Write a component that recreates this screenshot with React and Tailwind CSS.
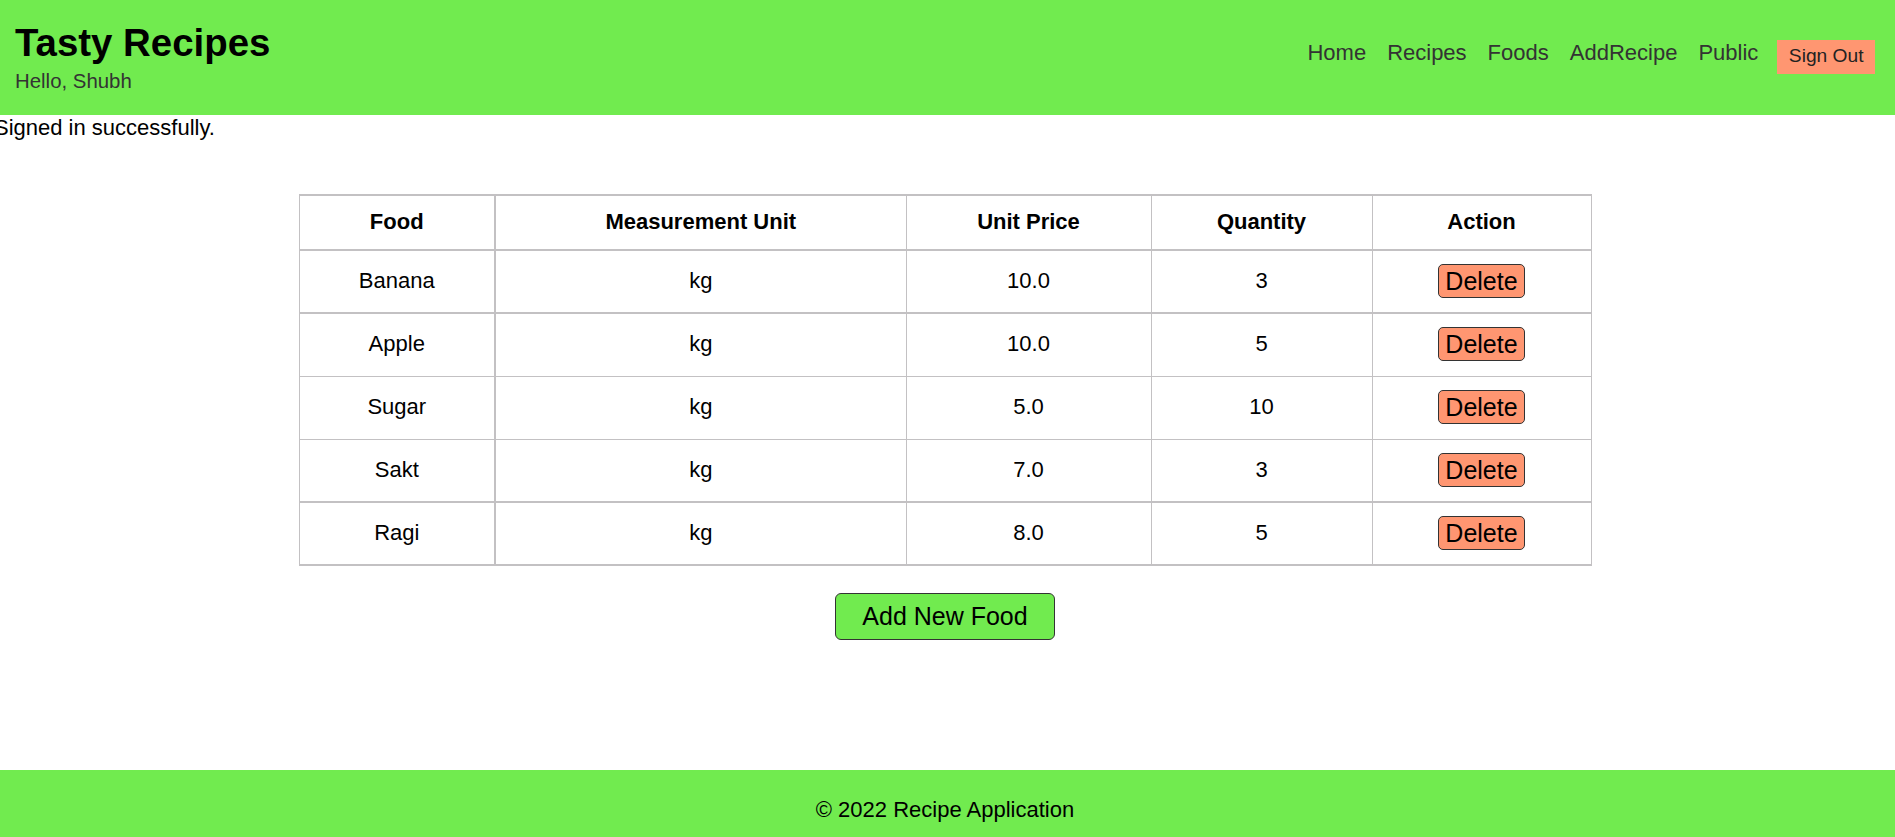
const foods = [
  { name: "Banana", unit: "kg", price: "10.0", qty: 3 },
  { name: "Apple", unit: "kg", price: "10.0", qty: 5 },
  { name: "Sugar", unit: "kg", price: "5.0", qty: 10 },
  { name: "Sakt", unit: "kg", price: "7.0", qty: 3 },
  { name: "Ragi", unit: "kg", price: "8.0", qty: 5 },
]

const links = ["Home", "Recipes", "Foods", "AddRecipe", "Public"]

export default function App() {
  return (
    <div className="min-h-screen flex flex-col bg-white text-black font-['Liberation_Sans',Arial,sans-serif] overflow-hidden">
      {/* header */}
      <header className="h-[115px] bg-[#71eb4f] flex justify-between items-center pl-[15px] pr-[20px]">
        <div className="pb-[1px]">
          <h1 className="text-[38.4px] leading-[44px] font-bold">Tasty Recipes</h1>
          <p className="mt-[4px] text-[20.4px] leading-[24px] text-[#333]">Hello, Shubh</p>
        </div>
        <nav className="flex items-start mb-[1px]">
          {links.map((l) => (
            <a key={l} href="#" className="text-[22px] leading-[26px] text-[#333] mr-[21px]">
              {l}
            </a>
          ))}
          <button className="bg-[#ff9671] text-[#222] text-[19.2px] leading-[22px] px-[11.5px] pt-[5px] pb-[7px] ml-[-2px]">
            Sign Out
          </button>
        </nav>
      </header>

      {/* content */}
      <main className="flex-1 pr-[5px]">
        <p className="text-[22px] leading-[25px] ml-[-6px] whitespace-nowrap">Signed in successfully.</p>

        <table className="mx-auto mt-[54px] w-[1292px] table-fixed border-collapse text-[22px] text-center">
          <colgroup>
            <col className="w-[196px]" />
            <col className="w-[411px]" />
            <col className="w-[245px]" />
            <col className="w-[221px]" />
            <col className="w-[219px]" />
          </colgroup>
          <thead>
            <tr className="h-[55px] border-t-2 border-b-2 border-[#c3c1c3]">
              <th className="border border-[#c3c1c3] border-r-2 font-bold pb-[2px]">Food</th>
              <th className="border border-[#c3c1c3] font-bold pb-[2px]">Measurement Unit</th>
              <th className="border border-[#c3c1c3] font-bold pb-[2px]">Unit Price</th>
              <th className="border border-[#c3c1c3] font-bold pb-[2px]">Quantity</th>
              <th className="border border-[#c3c1c3] font-bold pb-[2px]">Action</th>
            </tr>
          </thead>
          <tbody>
            {foods.map((f, i) => (
              <tr
                key={f.name}
                className={
                  "h-[63px] border-[#c3c1c3] " +
                  (i === 0 || i === 3 || i === 4 ? "border-b-2" : "border-b")
                }
              >
                <td className="border-l border-r-2 border-[#c3c1c3] pb-[2px]">{f.name}</td>
                <td className="border-r border-[#c3c1c3] pb-[2px]">{f.unit}</td>
                <td className="border-r border-[#c3c1c3] pb-[2px]">{f.price}</td>
                <td className="border-r border-[#c3c1c3] pb-[2px]">{f.qty}</td>
                <td className="border-r border-[#c3c1c3]">
                  <button className="bg-[#ff9671] border border-[#333] rounded-[5px] text-[25px] leading-[32px] px-[6px]">
                    Delete
                  </button>
                </td>
              </tr>
            ))}
          </tbody>
        </table>

        <div className="flex justify-center mt-[27px]">
          <button className="bg-[#71eb4f] border border-[#333] rounded-[6px] text-[25px] leading-[27px] py-[9px] px-[26px]">
            Add New Food
          </button>
        </div>
      </main>

      {/* footer */}
      <footer className="h-[67px] bg-[#71eb4f] text-center text-[22px] leading-[25px] pt-[27px] pr-[5px]">
        © 2022 Recipe Application
      </footer>
    </div>
  )
}
